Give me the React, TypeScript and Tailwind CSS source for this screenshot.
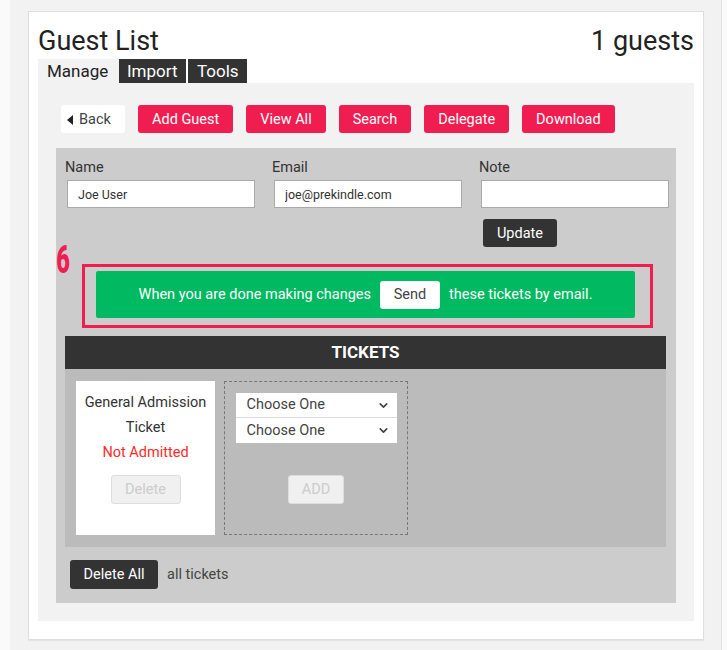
import React from "react";
import { ChevronDown } from "lucide-react";

const red = "bg-[#f01e50]";

const ActionButton = ({ label }: { label: string }) => (
  <button
    className={`${red} flex h-[28px] shrink-0 items-center rounded-[3px] px-[14px] pt-[1px] text-[14.5px] text-white`}
  >
    {label}
  </button>
);

const Field = ({ label, value }: { label: string; value: string }) => (
  <div className="flex w-[207px] shrink-0 flex-col">
    <label className="h-[20px] text-[14.5px] leading-[22px] text-[#333]">
      {label}
    </label>
    <input
      readOnly
      value={value}
      className="ml-[2px] mt-[3px] h-[28px] w-[188px] border border-[#aaa] bg-white px-[10px] text-[12.5px] text-[#333] outline-none"
    />
  </div>
);

const ChooseOne = () => (
  <div className="flex h-[25px] w-[161px] items-center justify-between border-b border-[#ddd] bg-white pl-[11px] pr-[7px] text-[14.5px] text-[#444] last:border-b-0">
    <span>Choose One</span>
    <ChevronDown size={13} strokeWidth={3} className="text-[#444]" />
  </div>
);

export default function App() {
  return (
    <div
      className="min-h-[650px] w-full bg-[#fafafa]"
      style={{ fontFamily: "Roboto, 'Liberation Sans', sans-serif" }}
    >
      <div className="ml-[10px] min-h-[650px] w-[712px] border-r border-[#e2e2e2] bg-[#f2f2f2] pt-[11px]">
        <div className="ml-[18px] h-[629px] w-[676px] border border-[#dedede] bg-white pl-[9px] pr-[9px] shadow-[0_1px_1px_rgba(0,0,0,0.05)]">
          {/* header */}
          <div className="flex h-[47px] items-end justify-between pb-[2px]">
            <h1 className="text-[27px] leading-[32px] text-[#222]">Guest List</h1>
            <span className="text-[27px] leading-[32px] text-[#222]">1 guests</span>
          </div>

          {/* tabs */}
          <div className="flex h-[24px] items-stretch text-[17px] leading-[24px]">
            <div className="w-[81px] bg-[#f2f2f2] pl-[9px] text-[#222]">Manage</div>
            <div className="w-[67px] bg-[#333] pl-[8px] text-white">Import</div>
            <div className="ml-[2px] w-[59px] bg-[#333] pl-[9px] text-white">Tools</div>
          </div>

          {/* panel */}
          <div className="h-[538px] w-[656px] bg-[#f2f2f2] pl-[18px] pt-[22px]">
            <div className="ml-[5px] flex gap-[13px]">
              <button className="flex h-[28px] w-[64px] items-center gap-[6px] rounded-[3px] bg-white pl-[6px] pt-[1px] text-[14.5px] text-[#444]">
                <svg width="6" height="10" viewBox="0 0 6 10">
                  <path d="M6 0 L0 5 L6 10 Z" fill="#222" />
                </svg>
                Back
              </button>
              <ActionButton label="Add Guest" />
              <ActionButton label="View All" />
              <ActionButton label="Search" />
              <ActionButton label="Delegate" />
              <ActionButton label="Download" />
            </div>

            {/* gray form area */}
            <div className="mt-[15px] h-[455px] w-[620px] bg-[#cccccc] pl-[9px] pr-[7px] pt-[9px]">
              <div className="flex">
                <Field label="Name" value="Joe User" />
                <Field label="Email" value="joe@prekindle.com" />
                <div className="flex w-[190px] shrink-0 flex-col">
                  <Field label="Note" value="" />
                  <button className="ml-[4px] mt-[11px] h-[28px] w-[74px] rounded-[3px] bg-[#333] pt-[1px] text-[14.5px] text-white">
                    Update
                  </button>
                </div>
              </div>

              {/* send banner */}
              <div className="relative mt-[-3px] h-[84px]">
                <span className="absolute left-[-13px] top-[-1px] scale-x-[0.62] text-[38px] leading-[34px] font-black text-[#f01e50]">
                  6
                </span>
                <div className="absolute left-[17px] top-[20px] h-[64px] w-[571px] border-[3px] border-[#f01e50] pl-[11px] pt-[4px]">
                  <div className="flex h-[47px] w-[539px] items-center justify-center gap-[9px] rounded-[2px] bg-[#00b960] text-[14.5px] text-white">
                    <span>When you are done making changes</span>
                    <button className="h-[28px] w-[60px] rounded-[3px] bg-white text-[14.5px] text-[#444]">
                      Send
                    </button>
                    <span>these tickets by email.</span>
                  </div>
                </div>
              </div>

              {/* tickets */}
              <div className="mt-[8px] w-[601px]">
                <div className="flex h-[33px] items-center justify-center bg-[#333] text-[17px] font-bold text-white">
                  TICKETS
                </div>
                <div className="flex h-[178px] gap-[9px] bg-[#bbbbbb] pl-[11px] pt-[12px]">
                  <div className="flex h-[154px] w-[139px] flex-col items-center bg-white pt-[9px] text-center text-[14.5px] leading-[25px] text-[#333]">
                    <span>General Admission</span>
                    <span>Ticket</span>
                    <span className="text-[#ff2a2a]">Not Admitted</span>
                    <button className="mt-[10px] h-[29px] w-[70px] rounded-[3px] border border-[#ddd] bg-[#f0f0f0] text-[14.5px] text-[#ccc]">
                      Delete
                    </button>
                  </div>
                  <div className="flex h-[154px] w-[184px] flex-col items-center border border-dashed border-[#777] pt-[11px]">
                    <div className="flex flex-col">
                      <ChooseOne />
                      <ChooseOne />
                    </div>
                    <button className="mt-[32px] h-[29px] w-[56px] rounded-[3px] border border-[#ddd] bg-[#f0f0f0] text-[14.5px] text-[#ccc]">
                      ADD
                    </button>
                  </div>
                </div>
              </div>

              <div className="mt-[13px] flex items-center gap-[9px] pl-[5px]">
                <button className="h-[29px] w-[88px] rounded-[3px] bg-[#333] text-[14.5px] text-white">
                  Delete All
                </button>
                <span className="text-[14.5px] text-[#444]">all tickets</span>
              </div>
            </div>
          </div>
        </div>
      </div>
    </div>
  );
}
